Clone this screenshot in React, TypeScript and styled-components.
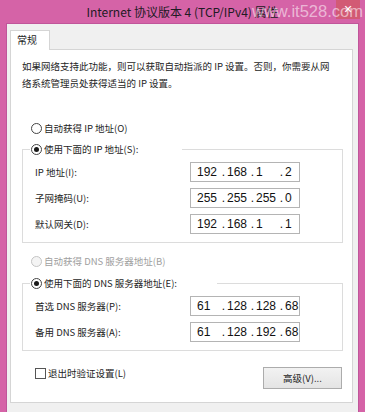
import React from "react";
import styled, { createGlobalStyle } from "styled-components";

const Global = createGlobalStyle`
  html, body { margin: 0; padding: 0; background: #d563a7; }
  body { font-family: "Noto Sans CJK SC", sans-serif; }
`;

const FONT = `"Noto Sans CJK SC", "Noto Sans", sans-serif`;

const Window = styled.div`
  position: relative;
  width: 365px;
  height: 412px;
  box-sizing: border-box;
  background: #d563a7;
  padding: 0 6px;
  display: flex;
  flex-direction: column;
  overflow: hidden;
`;

const TitleBar = styled.div`
  height: 23px;
  flex: none;
  display: flex;
  align-items: center;
  justify-content: center;
  font-family: ${FONT};
  font-size: 12px;
  color: #221a24;
`;

const CloseButton = styled.div`
  position: absolute;
  top: 0;
  right: 5px;
  width: 24px;
  height: 19px;
  background: #d25a74;
  color: #fff;
  font-family: "DejaVu Sans", sans-serif;
  font-size: 11px;
  display: flex;
  align-items: center;
  justify-content: center;
`;

const Watermark = styled.div`
  position: absolute;
  top: 0px;
  left: 252px;
  font-family: "Liberation Sans", sans-serif;
  font-size: 16.5px;
  line-height: 22px;
  color: rgba(255, 255, 255, 0.55);
  pointer-events: none;
  white-space: nowrap;
`;

const Client = styled.div`
  flex: 1;
  background: #f0f0f0;
  border: 1px solid #c0559a;
  border-bottom: none;
  padding: 6px 5px 0 3px;
  display: flex;
  flex-direction: column;
  font-family: ${FONT};
  font-size: 9.5px;
  color: #1e1e1e;
`;

const TabStrip = styled.div`
  display: flex;
  height: 20px;
  position: relative;
  z-index: 1;
  margin-bottom: -1px;
`;

const Tab = styled.div`
  width: 40px;
  box-sizing: border-box;
  background: #fff;
  border: 1px solid #d5d5d5;
  border-bottom: none;
  padding-left: 6px;
  line-height: 18px;
  font-size: 10px;
`;

const Panel = styled.div`
  background: #fff;
  border: 1px solid #d5d5d5;
  padding: 8px 9px 13px 0;
  display: flex;
  flex-direction: column;
`;

const Intro = styled.p`
  margin: 0;
  padding-left: 11px;
  line-height: 17px;
  white-space: nowrap;
`;

const Option = styled.label<{ $disabled?: boolean; $indent?: number; $top?: number }>`
  display: flex;
  align-items: center;
  gap: 2px;
  height: 17px;
  line-height: 17px;
  padding-left: ${(p) => p.$indent ?? 20}px;
  margin-top: ${(p) => p.$top ?? 0}px;
  color: ${(p) => (p.$disabled ? "#a0a0a0" : "#1e1e1e")};
  white-space: nowrap;
`;

const Radio = styled.span<{ $checked?: boolean; $disabled?: boolean }>`
  width: 11px;
  height: 11px;
  box-sizing: border-box;
  border-radius: 50%;
  border: 1px solid ${(p) => (p.$disabled ? "#c4c4c4" : "#444")};
  background: ${(p) => (p.$disabled ? "#f4f4f4" : "#fff")};
  display: flex;
  align-items: center;
  justify-content: center;
  flex: none;
  &::after {
    content: "";
    width: 5px;
    height: 5px;
    border-radius: 50%;
    background: #1a1a1a;
    display: ${(p) => (p.$checked ? "block" : "none")};
  }
`;

const Checkbox = styled.span`
  width: 11px;
  height: 11px;
  box-sizing: border-box;
  border: 1px solid #555;
  background: #fff;
  flex: none;
`;

const Group = styled.fieldset<{ $top: number }>`
  margin: ${(p) => p.$top}px 0 0 11px;
  border: 1px solid #dcdcdc;
  padding: 4px 0 8px 7px;
  min-width: 0;
`;

const Legend = styled.legend<{ $width: number }>`
  padding: 0;
  width: ${(p) => p.$width}px;
`;

const Rows = styled.div`
  display: flex;
  flex-direction: column;
  gap: 6px;
  padding-left: 5px;
`;

const Row = styled.div`
  display: grid;
  grid-template-columns: 155px 110px;
  align-items: center;
`;

const IpBox = styled.div`
  height: 20px;
  box-sizing: border-box;
  border: 1px solid #b4b4b4;
  background: #fff;
  display: grid;
  grid-template-columns: 23px 7px 22px 7px 22px 7px 1fr;
  align-items: center;
  padding-left: 6px;
  font-family: "Liberation Sans", sans-serif;
  font-size: 12px;
  color: #111;
`;

const Field = styled.span`
  text-align: left;
`;

const Dot = styled.span`
  text-align: center;
`;

const Footer = styled.div`
  display: flex;
  justify-content: space-between;
  align-items: flex-start;
  margin-top: 14px;
  padding-left: 24px;
  padding-right: 1px;
`;

const Button = styled.div`
  width: 79px;
  height: 22px;
  margin-top: 2px;
  box-sizing: border-box;
  border: 1px solid #acacac;
  background: linear-gradient(#f2f2f2, #e4e4e4);
  display: flex;
  align-items: center;
  justify-content: center;
`;

const IpInput: React.FC<{ parts: string[] }> = ({ parts }) => (
  <IpBox>
    <Field>{parts[0]}</Field>
    <Dot>.</Dot>
    <Field>{parts[1]}</Field>
    <Dot>.</Dot>
    <Field>{parts[2]}</Field>
    <Dot>.</Dot>
    <Field>{parts[3]}</Field>
  </IpBox>
);

const ipRows = [
  { label: "IP 地址(I):", parts: ["192", "168", "1", "2"] },
  { label: "子网掩码(U):", parts: ["255", "255", "255", "0"] },
  { label: "默认网关(D):", parts: ["192", "168", "1", "1"] },
];

const dnsRows = [
  { label: "首选 DNS 服务器(P):", parts: ["61", "128", "128", "68"] },
  { label: "备用 DNS 服务器(A):", parts: ["61", "128", "192", "68"] },
];

export default function App() {
  return (
    <>
      <Global />
      <Window>
        <TitleBar>Internet 协议版本 4 (TCP/IPv4) 属性</TitleBar>
        <CloseButton>✕</CloseButton>
        <Watermark>www.it528.com</Watermark>
        <Client>
          <TabStrip>
            <Tab>常规</Tab>
          </TabStrip>
          <Panel>
            <Intro>
              如果网络支持此功能，则可以获取自动指派的 IP 设置。否则，你需要从网
              <br />
              络系统管理员处获得适当的 IP 设置。
            </Intro>
            <Option $top={28}>
              <Radio />
              自动获得 IP 地址(O)
            </Option>
            <Group $top={4}>
              <Legend $width={152}>
                <Option $indent={1}>
                  <Radio $checked />
                  使用下面的 IP 地址(S):
                </Option>
              </Legend>
              <Rows>
                {ipRows.map((r) => (
                  <Row key={r.label}>
                    <span>{r.label}</span>
                    <IpInput parts={r.parts} />
                  </Row>
                ))}
              </Rows>
            </Group>
            <Option $top={10} $disabled>
              <Radio $disabled />
              自动获得 DNS 服务器地址(B)
            </Option>
            <Group $top={5}>
              <Legend $width={187}>
                <Option $indent={1}>
                  <Radio $checked />
                  使用下面的 DNS 服务器地址(E):
                </Option>
              </Legend>
              <Rows>
                {dnsRows.map((r) => (
                  <Row key={r.label}>
                    <span>{r.label}</span>
                    <IpInput parts={r.parts} />
                  </Row>
                ))}
              </Rows>
            </Group>
            <Footer>
              <Option $indent={0}>
                <Checkbox />
                退出时验证设置(L)
              </Option>
              <Button>高级(V)...</Button>
            </Footer>
          </Panel>
        </Client>
      </Window>
    </>
  );
}
